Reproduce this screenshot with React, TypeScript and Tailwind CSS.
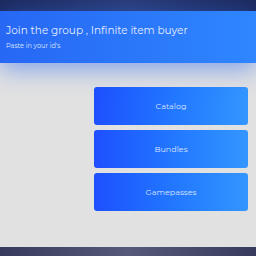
export default function App() {
  const items = ['Catalog', 'Bundles', 'Gamepasses'];
  return (
    <div className="w-[256px] h-[256px] flex flex-col bg-[#e1e1e1] overflow-hidden" style={{ fontFamily: 'Montserrat, "Open Sans", "Liberation Sans", sans-serif' }}>
      <div className="h-[11px] bg-gradient-to-r from-[#1c2a5c] via-[#2a3d78] to-[#1c2a5c]" />
      <div className="relative z-10 h-[52px] bg-gradient-to-r from-[#2767f4] to-[#2f86ff] px-[6px] pt-[13px] shadow-[0_6px_24px_rgba(50,110,245,0.55)]">
        <div className="text-[10.5px] leading-[14px] text-[#e6ecff]">Join the group , Infinite item buyer</div>
        <div className="mt-[4px] text-[6.5px] leading-[8px] text-[#dfe7ff]">Paste in your id's</div>
      </div>
      <div className="flex-1 flex flex-col items-end pt-[24px] pr-[8px] gap-[5px]">
        {items.map((t) => (
          <div key={t} className="w-[154px] h-[38px] rounded-[3px] bg-gradient-to-r from-[#1f4ffe] to-[#3396ff] flex items-center justify-center text-[8px] text-[#dbe4ff]">
            {t}
          </div>
        ))}
      </div>
      <div className="h-[9px] bg-gradient-to-r from-[#363a5c] via-[#565a7a] to-[#363a5c]" />
    </div>
  );
}
